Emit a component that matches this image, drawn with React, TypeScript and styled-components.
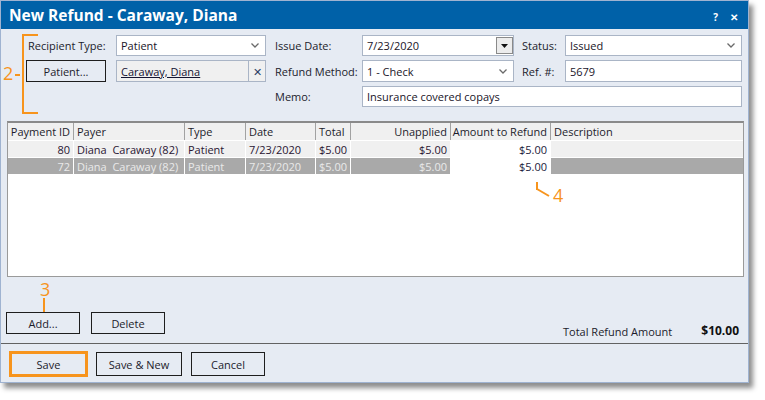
import React from "react";
import styled, { createGlobalStyle } from "styled-components";

const GlobalStyle = createGlobalStyle`
  html, body {
    margin: 0;
    padding: 0;
    background: #ffffff;
  }
  body {
    font-family: "Open Sans", "Noto Sans", "Liberation Sans", sans-serif;
    font-size: 11px;
    color: #1c1c2c;
  }
`;

const ORANGE = "#f7941d";
const COLS = "65px 110px 60px 69px 34px 99px 99px 1fr";

const Stage = styled.div`
  width: 765px;
  height: 400px;
  overflow: hidden;
`;

const Window = styled.div`
  position: relative;
  width: 747px;
  height: 381px;
  border: 1px solid #9fb3d1;
  background: #e6ebf3;
  display: flex;
  flex-direction: column;
  box-shadow: 4px 5px 5px rgba(0, 0, 0, 0.45);
`;

const TitleBar = styled.div`
  height: 28px;
  background: #0061a8;
  color: #ffffff;
  display: flex;
  align-items: center;
  padding: 0 10px 0 8px;
`;

const Title = styled.div`
  font-size: 15.5px;
  font-weight: 700;
`;

const TitleButtons = styled.div`
  margin-left: auto;
  display: flex;
  gap: 12px;
  align-items: center;
`;

const TitleBtn = styled.span`
  font-size: 10px;
  font-weight: 700;
  line-height: 1;
  padding-top: 3px;
`;

const FormGrid = styled.div`
  display: grid;
  grid-template-columns: 90px 150px 96px 152px 51px 177px;
  grid-template-rows: 21px 22px 21px;
  row-gap: 4px;
  padding: 6px 0 0 25px;
`;

const Label = styled.div<{ $pad?: number }>`
  display: flex;
  align-items: center;
  padding-left: ${(p) => p.$pad ?? 0}px;
  white-space: nowrap;
`;

const Field = styled.div<{ $span?: number; $ro?: boolean }>`
  grid-column: span ${(p) => p.$span ?? 1};
  display: flex;
  align-items: center;
  background: ${(p) => (p.$ro ? "#f0f0f0" : "#ffffff")};
  border: 1px solid #aab5c6;
  box-sizing: border-box;
  padding-left: 4px;
  color: #201428;
  overflow: hidden;
`;

const FieldText = styled.span<{ $link?: boolean }>`
  flex: 1;
  text-decoration: ${(p) => (p.$link ? "underline" : "none")};
  color: ${(p) => (p.$link ? "#141432" : "inherit")};
`;

const Chevron = styled.svg`
  width: 8px;
  height: 5px;
  margin-right: 6px;
`;

const DropBtn = styled.div`
  align-self: stretch;
  width: 15px;
  margin: 1px 0;
  background: #ececec;
  border: 1px solid #8a8a8a;
  display: flex;
  align-items: center;
  justify-content: center;
`;

const ClearBtn = styled.div`
  align-self: stretch;
  width: 16px;
  border-left: 1px solid #aab5c6;
  display: flex;
  align-items: center;
  justify-content: center;
  color: #2c3e64;
  font-size: 11px;
`;

const Button = styled.button<{ $w: number; $h?: number }>`
  width: ${(p) => p.$w}px;
  height: ${(p) => p.$h ?? 22}px;
  box-sizing: border-box;
  background: #e6ebf3;
  border: 1px solid #1e1e1e;
  font-family: inherit;
  font-size: 11px;
  color: #1c1c2c;
  padding: 0;
`;

const TableBox = styled.div`
  margin: 14px 0 0 6px;
  width: 737px;
  height: 156px;
  box-sizing: border-box;
  background: #ffffff;
  border: 1px solid #9a9a9a;
  border-top: 2px solid #8a8a8a;
  display: flex;
  flex-direction: column;
  gap: 1px;
`;

const HeaderRow = styled.div`
  display: grid;
  grid-template-columns: ${COLS};
  column-gap: 1px;
  height: 17px;
  background: #a2a2a2;
`;

const HeaderCell = styled.div<{ $right?: boolean }>`
  background: #f0f0f0;
  display: flex;
  align-items: center;
  justify-content: ${(p) => (p.$right ? "flex-end" : "flex-start")};
  padding: 0 3px;
  white-space: nowrap;
  color: #1c1c2c;
`;

const DataRow = styled.div<{ $sel?: boolean }>`
  display: grid;
  grid-template-columns: ${COLS};
  column-gap: 1px;
  height: 16px;
  color: ${(p) => (p.$sel ? "#e9e9e9" : "#2a1632")};
`;

const Cell = styled.div<{ $sel?: boolean; $right?: boolean; $edit?: boolean }>`
  background: ${(p) => (p.$edit ? "#ffffff" : p.$sel ? "#a9a9a9" : "#f0f0f0")};
  color: ${(p) => (p.$edit ? "#1c1c3c" : "inherit")};
  display: flex;
  align-items: center;
  justify-content: ${(p) => (p.$right ? "flex-end" : "flex-start")};
  padding: 0 3px;
  white-space: pre;
`;

const ActionRow = styled.div`
  display: flex;
  align-items: flex-end;
  gap: 11px;
  padding: 35px 9px 0 5px;
  height: 22px;
`;

const TotalLabel = styled.div`
  margin-left: auto;
  margin-bottom: -5px;
  margin-right: 18px;
`;

const TotalValue = styled.div`
  font-weight: 700;
  font-size: 12px;
  margin-bottom: -5px;
  color: #101010;
`;

const Footer = styled.div`
  margin-top: 9px;
  border-top: 1px solid #626262;
  display: flex;
  align-items: center;
  gap: 9px;
  padding: 7px 0 0 8px;
`;

const SaveWrap = styled.div`
  border: 3px solid ${ORANGE};
  display: flex;
  margin-right: -1px;
`;

const SaveButton = styled(Button)`
  border: none;
`;

const Note = styled.div`
  position: absolute;
  color: ${ORANGE};
  font-size: 18px;
  line-height: 1;
  font-family: "Open Sans", "Noto Sans", sans-serif;
`;

const Bracket = styled.div`
  position: absolute;
  left: 21px;
  top: 33px;
  width: 14px;
  height: 76px;
  border: 2px solid ${ORANGE};
  border-right: none;
`;

const Tick = styled.div`
  position: absolute;
  background: ${ORANGE};
`;

const Chev = () => (
  <Chevron viewBox="0 0 8 5">
    <polyline points="0.5,0.5 4,4 7.5,0.5" fill="none" stroke="#6a6a6a" strokeWidth="1.3" />
  </Chevron>
);

export default function App() {
  return (
    <Stage>
      <GlobalStyle />
      <Window>
        <TitleBar>
          <Title>New Refund - Caraway, Diana</Title>
          <TitleButtons>
            <TitleBtn>?</TitleBtn>
            <TitleBtn>✕</TitleBtn>
          </TitleButtons>
        </TitleBar>

        <FormGrid>
          <Label $pad={2}>Recipient Type:</Label>
          <Field>
            <FieldText>Patient</FieldText>
            <Chev />
          </Field>
          <Label $pad={9}>Issue Date:</Label>
          <Field>
            <FieldText>7/23/2020</FieldText>
            <DropBtn>
              <svg width="7" height="4" viewBox="0 0 7 4">
                <polygon points="0,0 7,0 3.5,4" fill="#111" />
              </svg>
            </DropBtn>
          </Field>
          <Label $pad={8}>Status:</Label>
          <Field>
            <FieldText>Issued</FieldText>
            <Chev />
          </Field>

          <Label>
            <Button $w={80}>Patient...</Button>
          </Label>
          <Field $ro>
            <FieldText $link>Caraway, Diana</FieldText>
            <ClearBtn>✕</ClearBtn>
          </Field>
          <Label $pad={9}>Refund Method:</Label>
          <Field>
            <FieldText>1 - Check</FieldText>
            <Chev />
          </Field>
          <Label $pad={8}>Ref. #:</Label>
          <Field>
            <FieldText>5679</FieldText>
          </Field>

          <div />
          <div />
          <Label $pad={9}>Memo:</Label>
          <Field $span={3}>
            <FieldText>Insurance covered copays</FieldText>
          </Field>
        </FormGrid>

        <TableBox>
          <HeaderRow>
            <HeaderCell $right>Payment ID</HeaderCell>
            <HeaderCell>Payer</HeaderCell>
            <HeaderCell>Type</HeaderCell>
            <HeaderCell>Date</HeaderCell>
            <HeaderCell>Total</HeaderCell>
            <HeaderCell $right>Unapplied</HeaderCell>
            <HeaderCell $right>Amount to Refund</HeaderCell>
            <HeaderCell>Description</HeaderCell>
          </HeaderRow>
          {[
            { id: "80", sel: false },
            { id: "72", sel: true },
          ].map((r) => (
            <DataRow key={r.id} $sel={r.sel}>
              <Cell $sel={r.sel} $right>{r.id}</Cell>
              <Cell $sel={r.sel}>{"Diana  Caraway (82)"}</Cell>
              <Cell $sel={r.sel}>Patient</Cell>
              <Cell $sel={r.sel}>7/23/2020</Cell>
              <Cell $sel={r.sel}>$5.00</Cell>
              <Cell $sel={r.sel} $right>$5.00</Cell>
              <Cell $sel={r.sel} $right $edit>$5.00</Cell>
              <Cell $sel={r.sel} />
            </DataRow>
          ))}
        </TableBox>

        <ActionRow>
          <Button $w={74}>Add...</Button>
          <Button $w={74}>Delete</Button>
          <TotalLabel>Total Refund Amount</TotalLabel>
          <TotalValue>$10.00</TotalValue>
        </ActionRow>

        <Footer>
          <SaveWrap>
            <SaveButton $w={73} $h={20}>Save</SaveButton>
          </SaveWrap>
          <Button $w={86} $h={24}>Save &amp; New</Button>
          <Button $w={74} $h={24}>Cancel</Button>
        </Footer>

        <Bracket />
        <Note style={{ left: 2, top: 63 }}>2</Note>
        <Tick style={{ left: 14, top: 73, width: 5, height: 2 }} />

        <Note style={{ left: 39, top: 279 }}>3</Note>
        <Tick style={{ left: 42, top: 297, width: 2, height: 14 }} />

        <Tick style={{ left: 535, top: 181, width: 2, height: 8 }} />
        <svg
          width="16"
          height="10"
          viewBox="0 0 16 10"
          style={{ position: "absolute", left: 535, top: 186 }}
        >
          <line x1="1" y1="2" x2="13" y2="9" stroke={ORANGE} strokeWidth="2" />
        </svg>
        <Note style={{ left: 552, top: 185 }}>4</Note>
      </Window>
    </Stage>
  );
}
